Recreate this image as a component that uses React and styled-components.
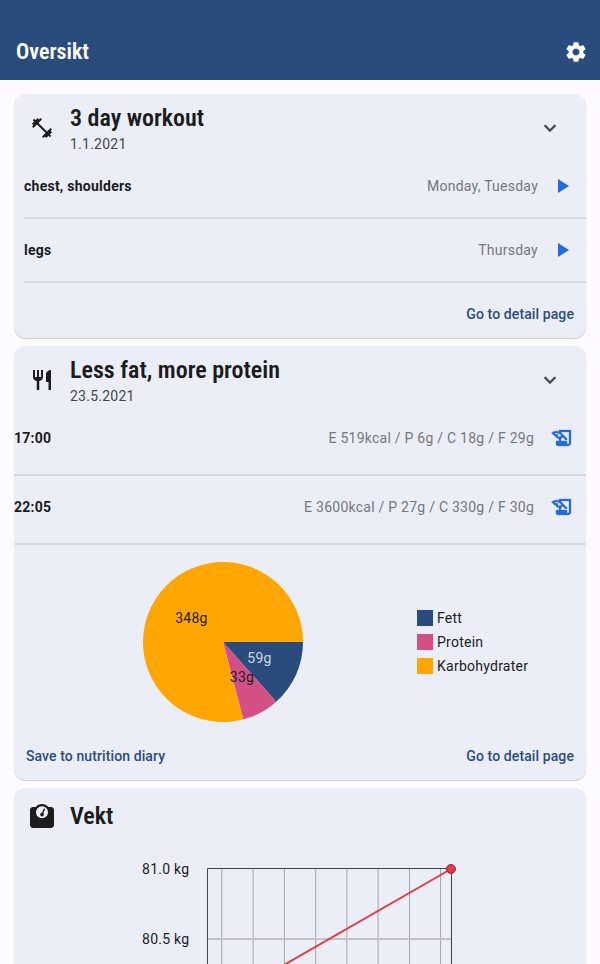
import React from "react";
import styled, { createGlobalStyle } from "styled-components";
import {
  MdSettings,
  MdExpandMore,
  MdFitnessCenter,
  MdHistoryEdu,
  MdPlayArrow,
  MdRestaurant,
} from "react-icons/md";
import { FaWeightScale } from "react-icons/fa6";

const GlobalStyle = createGlobalStyle`
  * { box-sizing: border-box; }
  html, body { margin: 0; padding: 0; }
  body {
    background: #fdfbff;
    color: #1a1c1e;
    font-family: Roboto, sans-serif;
    font-size: 14px;
    letter-spacing: 0.25px;
    overflow: hidden;
  }
  svg { display: block; flex: none; }
`;

const Screen = styled.div`
  width: 600px;
  height: 964px;
  overflow: hidden;
  display: flex;
  flex-direction: column;
`;

const AppBar = styled.header`
  flex: none;
  height: 80px;
  padding: 24px 12px 0 16px;
  display: flex;
  align-items: center;
  justify-content: space-between;
  background: #2a4c7d;
  color: #fff;
`;

const Heading = styled.h1`
  margin: 0;
  font-family: "Roboto Condensed", Roboto, sans-serif;
  font-stretch: 75%;
  font-size: ${(p) => p.$size}px;
  line-height: ${(p) => p.$line}px;
  font-weight: ${(p) => p.$weight};
  letter-spacing: 0;
`;

const IconSlot = styled.span`
  display: flex;
  flex: none;
  color: ${(p) => p.$color};
  svg path { stroke-width: ${(p) => p.$stroke || 0}px; }
  svg path[fill="none"] { stroke: none; }
`;

const CardList = styled.main`
  display: flex;
  flex-direction: column;
  gap: 8px;
  padding: 14px 14px 0;
`;

const Card = styled.section`
  flex: none;
  height: ${(p) => p.$height}px;
  display: flex;
  flex-direction: column;
  border-radius: 12px;
  background: #ebeef6;
  box-shadow: 0 1px 1px rgba(0, 0, 0, 0.18), 0 0 1px rgba(0, 0, 0, 0.06);
`;

const CardHeader = styled.div`
  flex: none;
  height: ${(p) => p.$height}px;
  display: flex;
  align-items: center;
  padding: 0 24px 0 16px;
`;

const TitleBlock = styled.div`
  flex: 1;
  margin-left: 16px;
`;

const Subtitle = styled.div`
  line-height: 20px;
  color: #43474e;
`;

const Row = styled.div`
  flex: none;
  height: ${(p) => p.$height}px;
  margin-left: ${(p) => p.$inset}px;
  padding-right: 12px;
  display: flex;
  border-bottom: 2px solid #d6d9e2;
`;

const RowLine = styled.div`
  flex: 1;
  height: ${(p) => p.$height}px;
  display: flex;
  align-items: center;
`;

const RowName = styled.span`
  flex: 1;
  font-weight: 700;
`;

const RowDetail = styled.span`
  margin-right: ${(p) => p.$gap}px;
  color: #75777f;
`;

const Actions = styled.div`
  flex: none;
  height: 48px;
  margin-top: auto;
  display: flex;
  align-items: center;
  justify-content: ${(p) => (p.$spread ? "space-between" : "flex-end")};
  padding: 0 12px;
`;

const TextButton = styled.button`
  border: 0;
  padding: 0;
  background: none;
  font: 500 14px/20px Roboto, sans-serif;
  letter-spacing: 0.1px;
  color: #2a4c7d;
`;

const PieSection = styled.div`
  flex: none;
  height: 185px;
  display: flex;
  align-items: center;
  padding: 8px 0 0 129px;
`;

const Legend = styled.ul`
  list-style: none;
  margin: 0 0 0 114px;
  padding: 0;
  display: flex;
  flex-direction: column;
  gap: 8px;
`;

const LegendItem = styled.li`
  display: flex;
  align-items: center;
  gap: 4px;
  height: 16px;
`;

const Swatch = styled.span`
  width: 16px;
  height: 16px;
  background: ${(p) => p.$color};
`;

const ChartWrap = styled.div`
  padding: 18px 0 0 116px;
`;

const ChartText = styled.text`
  font-family: Roboto, sans-serif;
  font-size: 14px;
  letter-spacing: 0.25px;
  fill: ${(p) => p.$color};
  text-anchor: ${(p) => p.$anchor || "middle"};
`;

const macros = [
  { name: "Fett", value: 59, color: "#2a4c7d", text: "#cdd5e2", x: 116.5, y: 101 },
  { name: "Protein", value: 33, color: "#d35087", text: "#1a1c1e", x: 99, y: 120 },
  { name: "Karbohydrater", value: 348, color: "#ffa600", text: "#1a1c1e", x: 48.5, y: 61 },
];

function slicePath(start, end) {
  const at = (a) => `${80 + 80 * Math.cos(a)} ${80 + 80 * Math.sin(a)}`;
  return `M80 80L${at(start)}A80 80 0 ${end - start > Math.PI ? 1 : 0} 1 ${at(end)}Z`;
}

function MacroPie() {
  const total = macros.reduce((sum, m) => sum + m.value, 0);
  let angle = 0;
  const slices = macros.map((m) => {
    const start = angle;
    angle += (m.value / total) * Math.PI * 2;
    return { ...m, d: slicePath(start, angle) };
  });
  return (
    <svg width="160" height="160" viewBox="0 0 160 160">
      {slices.map((s) => (
        <path key={s.name} d={s.d} fill={s.color} />
      ))}
      {slices.map((s) => (
        <ChartText key={s.name} x={s.x} y={s.y} $color={s.text}>
          {s.value}g
        </ChartText>
      ))}
    </svg>
  );
}

const gridColumns = [91.8, 123.1, 154.4, 185.7, 216.9, 248.1, 279.5, 310.6];

function WeightChart() {
  return (
    <svg width="340" height="120" viewBox="0 0 340 120">
      {gridColumns.map((x) => (
        <line key={x} x1={x} x2={x} y1="7" y2="120" stroke="#a6a6a8" />
      ))}
      <line x1="78" x2="321" y1="77" y2="77" stroke="#c3c3c7" strokeWidth="2" />
      <path d="M77.5 120V6.5H321.5V120" fill="none" stroke="#37474f" />
      <path d="M321 7L153 103.5L124 120" fill="none" stroke="#e63946" strokeWidth="2" />
      <circle cx="321" cy="7" r="4.5" fill="#e63946" stroke="#8c2634" />
      <ChartText x="59.4" y="12" $anchor="end" $color="#1a1c1e">81.0 kg</ChartText>
      <ChartText x="59.4" y="82" $anchor="end" $color="#1a1c1e">80.5 kg</ChartText>
    </svg>
  );
}

function Header({ icon: Icon, title, subtitle }) {
  return (
    <CardHeader $height={68}>
      <IconSlot $color="#1a1c1e"><Icon size={24} /></IconSlot>
      <TitleBlock>
        <Heading as="h2" $size={24} $line={32} $weight={600}>{title}</Heading>
        <Subtitle>{subtitle}</Subtitle>
      </TitleBlock>
      <IconSlot $color="#43474e" $stroke={0.3}><MdExpandMore size={24} /></IconSlot>
    </CardHeader>
  );
}

const workouts = [
  ["chest, shoulders", "Monday, Tuesday"],
  ["legs", "Thursday"],
];

const meals = [
  ["17:00", "E 519kcal / P 6g / C 18g / F 29g"],
  ["22:05", "E 3600kcal / P 27g / C 330g / F 30g"],
];

export default function App() {
  return (
    <Screen>
      <GlobalStyle />
      <AppBar>
        <Heading $size={22} $line={28} $weight={600}>Oversikt</Heading>
        <IconSlot $color="#fff" $stroke={0.3}><MdSettings size={24} /></IconSlot>
      </AppBar>
      <CardList>
        <Card $height={244}>
          <Header icon={MdFitnessCenter} title="3 day workout" subtitle="1.1.2021" />
          {workouts.map(([name, days], i) => (
            <Row key={name} $height={i === 0 ? 57 : 64} $inset={10}>
              <RowLine $height={i === 0 ? 48 : 62}>
                <RowName>{name}</RowName>
                <RowDetail $gap={12}>{days}</RowDetail>
                <IconSlot $color="#256bd8"><MdPlayArrow size={24} /></IconSlot>
              </RowLine>
            </Row>
          ))}
          <Actions>
            <TextButton>Go to detail page</TextButton>
          </Actions>
        </Card>
        <Card $height={434}>
          <Header icon={MdRestaurant} title="Less fat, more protein" subtitle="23.5.2021" />
          {meals.map(([time, values], i) => (
            <Row key={time} $height={i === 0 ? 62 : 69} $inset={0}>
              <RowLine $height={i === 0 ? 48 : 62}>
                <RowName>{time}</RowName>
                <RowDetail $gap={16}>{values}</RowDetail>
                <IconSlot $color="#256bd8" $stroke={0.3}><MdHistoryEdu size={24} /></IconSlot>
              </RowLine>
            </Row>
          ))}
          <PieSection>
            <MacroPie />
            <Legend>
              {macros.map((m) => (
                <LegendItem key={m.name}>
                  <Swatch $color={m.color} />
                  {m.name}
                </LegendItem>
              ))}
            </Legend>
          </PieSection>
          <Actions $spread>
            <TextButton>Save to nutrition diary</TextButton>
            <TextButton>Go to detail page</TextButton>
          </Actions>
        </Card>
        <Card $height={300}>
          <CardHeader $height={56}>
            <IconSlot $color="#1a1c1e"><FaWeightScale size={24} /></IconSlot>
            <TitleBlock>
              <Heading as="h2" $size={24} $line={32} $weight={600}>Vekt</Heading>
            </TitleBlock>
          </CardHeader>
          <ChartWrap>
            <WeightChart />
          </ChartWrap>
        </Card>
      </CardList>
    </Screen>
  );
}
